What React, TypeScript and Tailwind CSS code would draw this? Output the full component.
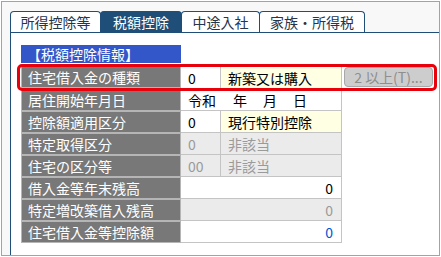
import React from 'react'

const tabs = [
  { label: '所得控除等', w: 'w-[91px]', active: false },
  { label: '税額控除', w: 'w-[82px]', active: true },
  { label: '中途入社', w: 'w-[79px]', active: false },
  { label: '家族・所得税', w: 'w-[106px]', active: false },
]

function Label({ text }: { text: string }) {
  return (
    <div className="flex h-[22px] w-[160px] shrink-0 items-center border border-[#b5b5b5] bg-[#787878] pl-[6px] text-white">
      {text}
    </div>
  )
}

function Cell({ w, tone = 'white', align = 'left', children }: { w: string; tone?: 'white' | 'yellow' | 'gray'; align?: 'left' | 'right'; children?: React.ReactNode }) {
  const bg = tone === 'yellow' ? 'bg-[#ffffe3]' : tone === 'gray' ? 'bg-[#ebebeb] text-[#9a9a9a]' : 'bg-white text-black'
  const al = align === 'right' ? 'justify-end pr-[8px]' : 'pl-[7px]'
  return <div className={`flex h-[22px] shrink-0 items-center border-r border-b border-[#c4c4c4] ${w} ${bg} ${al}`}>{children}</div>
}

export default function App() {
  return (
    <div className="h-[257px] w-[441px] bg-white p-px text-[14px] leading-[20px] font-['Noto_Sans_CJK_JP',sans-serif]">
      <div className="flex h-full flex-col overflow-hidden border border-[#a3a3a3] bg-[#f8f8f8] pl-2 pt-[9px]">
        <div className="flex h-[21px] shrink-0">
          {tabs.map((t, i) => (
            <div
              key={t.label}
              className={`flex h-[21px] items-center justify-center rounded-t-[4px] border border-b-0 border-[#1f4e79] ${t.w} ${i > 0 ? '-ml-px' : ''} ${t.active ? 'bg-[#1f4e79] text-white' : 'bg-white text-[#24354c]'}`}
            >
              {t.label}
            </div>
          ))}
        </div>
        <div className="relative flex-1 border-t border-l border-[#1f4e79] bg-white pt-[12px] pl-[10px]">
          <div className="flex h-[18px] w-[160px] items-center bg-[#3356c9] pl-[6px] text-white">【税額控除情報】</div>
          <div className="mt-[3px] flex flex-col">
            <div className="flex">
              <Label text="住宅借入金の種類" />
              <div className="flex border-t border-[#c4c4c4]">
                <Cell w="w-[40px]">0</Cell>
                <Cell w="w-[121px]" tone="yellow">新築又は購入</Cell>
              </div>
              <button className="ml-[2px] mt-[1px] flex h-[20px] w-[89px] items-center justify-center rounded-[4px] border border-[#a8a8a8] bg-[#cdcdcd] text-[#8e8e8e]">
                <span>2</span>
                <span className="ml-[3px]">以上(T)...</span>
              </button>
            </div>
            <div className="flex">
              <Label text="居住開始年月日" />
              <Cell w="w-[161px]">
                <span>令和</span>
                <span className="ml-[17px]">年</span>
                <span className="ml-[16px]">月</span>
                <span className="ml-[16px]">日</span>
              </Cell>
            </div>
            <div className="flex">
              <Label text="控除額適用区分" />
              <Cell w="w-[40px]">0</Cell>
              <Cell w="w-[121px]" tone="yellow">現行特別控除</Cell>
            </div>
            <div className="flex">
              <Label text="特定取得区分" />
              <Cell w="w-[40px]" tone="gray">0</Cell>
              <Cell w="w-[121px]" tone="gray">非該当</Cell>
            </div>
            <div className="flex">
              <Label text="住宅の区分等" />
              <Cell w="w-[40px]" tone="gray">00</Cell>
              <Cell w="w-[121px]" tone="gray">非該当</Cell>
            </div>
            <div className="flex">
              <Label text="借入金等年末残高" />
              <Cell w="w-[161px]" align="right">0</Cell>
            </div>
            <div className="flex">
              <Label text="特定増改築借入残高" />
              <Cell w="w-[161px]" tone="gray" align="right">0</Cell>
            </div>
            <div className="flex">
              <Label text="住宅借入金等控除額" />
              <Cell w="w-[161px]" align="right"><span className="text-[#0055d4]">0</span></Cell>
            </div>
          </div>
          <div className="pointer-events-none absolute top-[31px] left-[6px] h-[27px] w-[420px] rounded-[5px] border-[3px] border-[#e8000b]" />
        </div>
      </div>
    </div>
  )
}
